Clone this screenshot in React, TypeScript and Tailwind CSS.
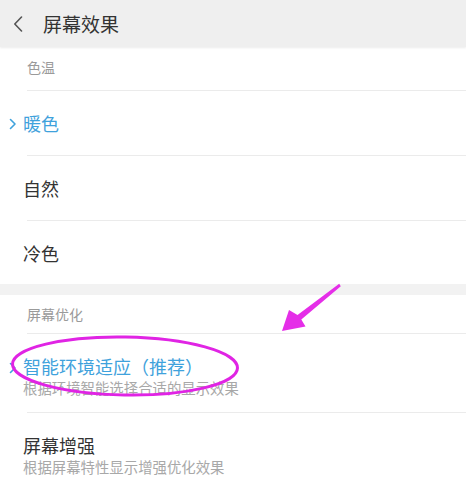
import { ReactNode } from 'react';

const FONT = "font-['Noto_Sans_CJK_SC','Noto_Sans',sans-serif]";

function Divider() {
  return <div className="ml-[27px] h-px bg-[#ebebeb]" />;
}

function Check() {
  return (
    <svg width="8" height="12" viewBox="0 0 8 12" fill="none" className="mt-[1px]">
      <path d="M1.5 1.5 L6 6 L1.5 10.5" stroke="#3fa2dc" strokeWidth="1.6" strokeLinecap="round" strokeLinejoin="round" />
    </svg>
  );
}

type RowProps = {
  title: string;
  selected?: boolean;
  height: string;
  children?: ReactNode;
};

function Row({ title, selected, height }: RowProps) {
  return (
    <div className={`flex items-center ${height}`}>
      <div className="flex w-[23px] justify-center pl-[3px]">{selected && <Check />}</div>
      <span className={`text-[18px] leading-none ${selected ? 'text-[#3fa2dc]' : 'text-[#333333]'}`}>{title}</span>
    </div>
  );
}

function DetailRow({ title, sub, selected, height }: { title: string; sub: string; selected?: boolean; height: string }) {
  return (
    <div className={`flex ${height}`}>
      <div className="flex w-[23px] justify-center pl-[3px] pt-[27px]">{selected && <Check />}</div>
      <div className="flex flex-col pt-[23px]">
        <span className={`text-[18px] leading-[18px] ${selected ? 'text-[#3fa2dc]' : 'text-[#333333]'}`}>{title}</span>
        <span className="mt-[5px] text-[14.4px] leading-[16px] text-[#a8a8a8]">{sub}</span>
      </div>
    </div>
  );
}

export default function App() {
  return (
    <div className={`relative h-[481px] w-[466px] overflow-hidden bg-white ${FONT}`}>
      <header className="flex h-[47px] items-center bg-[#efefef] shadow-[0_1px_2px_rgba(0,0,0,0.08)]">
        <svg width="10" height="16" viewBox="0 0 10 16" fill="none" className="ml-[13px]">
          <path d="M8.5 1 L1.8 8 L8.5 15" stroke="#555555" strokeWidth="1.6" strokeLinecap="round" strokeLinejoin="round" />
        </svg>
        <h1 className="ml-[20px] text-[19px] leading-none text-[#333333]">屏幕效果</h1>
      </header>

      <section>
        <div className="flex h-[43px] items-center pb-[2px] pl-[27px] text-[14px] text-[#9a9a9a]">色温</div>
        <Divider />
        <Row title="暖色" selected height="h-[64px]" />
        <Divider />
        <Row title="自然" height="h-[64px]" />
        <Divider />
        <Row title="冷色" height="h-[63px]" />
      </section>

      <div className="h-[11px] bg-[#f2f2f2]" />

      <section>
        <div className="flex h-[38px] items-center pl-[27px] text-[14px] text-[#9a9a9a]">屏幕优化</div>
        <Divider />
        <DetailRow title="智能环境适应（推荐）" sub="根据环境智能选择合适的显示效果" selected height="h-[78px]" />
        <Divider />
        <DetailRow title="屏幕增强" sub="根据屏幕特性显示增强优化效果" height="h-[80px]" />
      </section>

      <svg className="pointer-events-none absolute left-0 top-0" width="466" height="481" viewBox="0 0 466 481">
        <ellipse cx="125" cy="366" rx="112.5" ry="29" fill="none" stroke="#e024e4" strokeWidth="3" transform="rotate(1 125 366)" />
        <polygon
          points="339.2,283.8 297.5,314.9 289,310 282,331 305.5,326.5 301.3,319.5 340.8,286.2"
          fill="#e52ee8"
        />
      </svg>
    </div>
  );
}
